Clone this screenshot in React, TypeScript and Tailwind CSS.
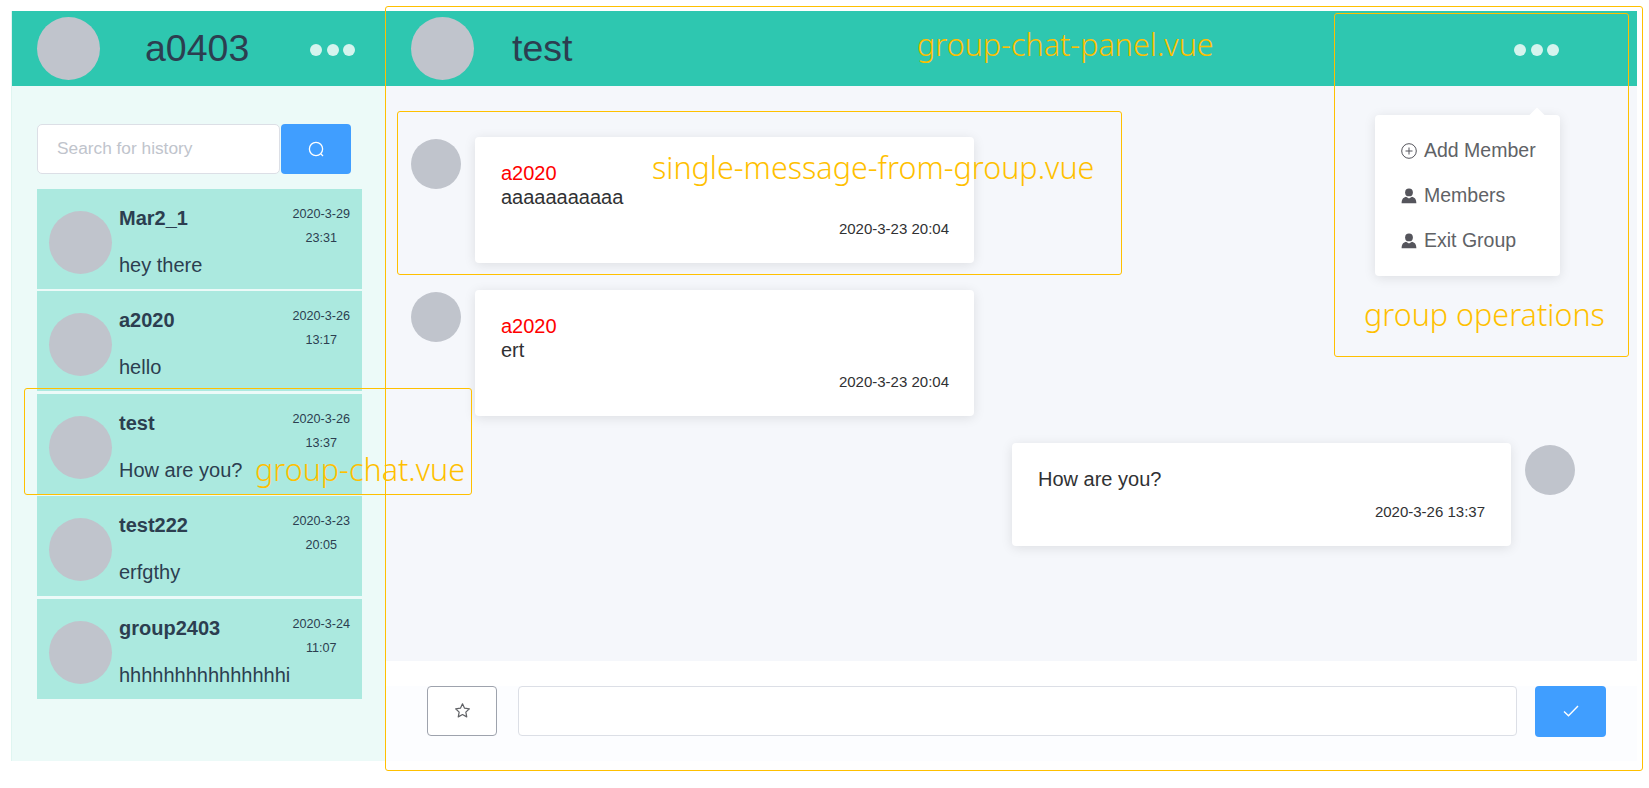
import React from "react";

const chats = [
  { name: "Mar2_1", date: "2020-3-29", time: "23:31", msg: "hey there" },
  { name: "a2020", date: "2020-3-26", time: "13:17", msg: "hello" },
  { name: "test", date: "2020-3-26", time: "13:37", msg: "How are you?" },
  { name: "test222", date: "2020-3-23", time: "20:05", msg: "erfgthy" },
  { name: "group2403", date: "2020-3-24", time: "11:07", msg: "hhhhhhhhhhhhhhhi" },
];

const Dots = () => (
  <div className="flex gap-[4.5px] mt-[3px]">
    <span className="w-3 h-3 rounded-full bg-[#d5f4ee]" />
    <span className="w-3 h-3 rounded-full bg-[#d5f4ee]" />
    <span className="w-3 h-3 rounded-full bg-[#d5f4ee]" />
  </div>
);

const PersonIcon = () => (
  <svg width="16" height="16" viewBox="0 0 16 16" fill="#55555c">
    <circle cx="8" cy="4.4" r="3.9" />
    <path d="M0.6 15.2c.2-3.4 1-5.4 4.4-6.4L8 10.6l3-1.8c3.4 1 4.2 3 4.4 6.4z" />
  </svg>
);

const PlusCircleIcon = () => (
  <svg width="16" height="16" viewBox="0 0 16 16" fill="none" stroke="#55555c" strokeWidth="1">
    <circle cx="8" cy="8" r="7.3" />
    <path d="M8 4.5v7M4.5 8h7" />
  </svg>
);

const MessageCard = ({ sender, text }: { sender: string; text: string }) => (
  <div className="flex items-start pl-[25px]">
    <div className="w-[50px] h-[50px] rounded-full bg-[#c0c4cc] mt-[2px] shrink-0" />
    <div className="ml-[14px] w-[499px] h-[126px] bg-white rounded-[4px] shadow-[0_2px_12px_0_rgba(0,0,0,0.1)] pl-[26px] pr-[25px] pt-6 text-[20px] leading-6 text-[#303133]">
      <div className="text-[#ff0000]">{sender}</div>
      <div>{text}</div>
      <div className="mt-2 text-right text-[15px] text-[#303133]">2020-3-23 20:04</div>
    </div>
  </div>
);

const Annotation = ({ className, label, labelClass }: { className: string; label: string; labelClass: string }) => (
  <div className={`absolute border border-[#ffc000] rounded-[3px] pointer-events-none ${className}`}>
    <span className={`absolute whitespace-nowrap text-[#ffc000] font-light font-['Noto_Sans',sans-serif] ${labelClass}`}>{label}</span>
  </div>
);

export default function App() {
  return (
    <div className="relative h-screen w-full overflow-hidden bg-white pt-[11px] pl-[11px] font-['Liberation_Sans',Arial,sans-serif]">
      <div className="flex w-[1626px]">
        {/* Left side */}
        <div className="w-[375px] h-[750px] bg-[#ecfaf8] border-l border-[#dff5f1] flex flex-col">
          <div className="h-[75px] bg-[#2ec7b0] flex items-center pl-[25px] pr-[31px] shrink-0">
            <div className="w-[63px] h-[63px] rounded-full bg-[#c0c4cc]" />
            <div className="ml-[45px] text-[37.5px] text-[#2c3e50]">a0403</div>
            <div className="ml-auto"><Dots /></div>
          </div>
          <div className="flex pl-[25px] mt-[38px]">
            <div className="w-[243px] h-[50px] bg-white border border-[#dcdfe6] rounded-[5px] pl-[19px] flex items-center text-[17.3px] text-[#c0c4cc]">
              Search for history
            </div>
            <button className="ml-px w-[70px] h-[50px] bg-[#409eff] rounded-[4px] flex items-center justify-center">
              <svg width="17" height="17" viewBox="0 0 17 17" fill="none" stroke="#ffffff" strokeWidth="1.3">
                <circle cx="8" cy="8" r="6.6" />
                <path d="M13 13l2 2" />
              </svg>
            </button>
          </div>
          <div className="flex flex-col gap-[2.4px] ml-[25px] mt-[15px] w-[325px]">
            {chats.map((c) => (
              <div key={c.name} className="flex h-[100px] bg-[#abe9df] pl-[12px] pr-3 text-[#2c3e50]">
                <div className="w-[63px] h-[63px] rounded-full bg-[#c0c4cc] mt-[22px] shrink-0" />
                <div className="ml-[7px] flex-1 min-w-0">
                  <div className="flex justify-between h-[61px]">
                    <div className="pt-[14px] text-[20px] leading-[30px] font-bold">{c.name}</div>
                    <div className="pt-[13px] text-[12.6px] leading-6 text-center">
                      <div>{c.date}</div>
                      <div>{c.time}</div>
                    </div>
                  </div>
                  <div className="text-[20px] leading-[30px] whitespace-nowrap">{c.msg}</div>
                </div>
              </div>
            ))}
          </div>
        </div>

        {/* Right side */}
        <div className="w-[1251px] flex flex-col">
          <div className="h-[75px] bg-[#2ec7b0] flex items-center pl-[25px] pr-[78px] shrink-0">
            <div className="w-[63px] h-[63px] rounded-full bg-[#c0c4cc]" />
            <div className="ml-[38px] text-[37.5px] text-[#2c3e50]">test</div>
            <div className="ml-auto"><Dots /></div>
          </div>
          <div className="h-[575px] bg-[#f5f7fb] pt-[51px] flex flex-col gap-[27px]">
            <MessageCard sender="a2020" text="aaaaaaaaaaa" />
            <MessageCard sender="a2020" text="ert" />
            <div className="flex items-start justify-end pr-[62px]">
              <div className="w-[499px] h-[103px] bg-white rounded-[4px] shadow-[0_2px_12px_0_rgba(0,0,0,0.1)] pl-[26px] pr-[26px] pt-6 text-[20px] leading-6 text-[#303133]">
                <div>How are you?</div>
                <div className="mt-[9px] text-right text-[15px]">2020-3-26 13:37</div>
              </div>
              <div className="ml-[14px] mt-[2px] w-[50px] h-[50px] rounded-full bg-[#c0c4cc] shrink-0" />
            </div>
          </div>
          <div className="h-[25px] bg-white" />
          <div className="h-[75px] bg-[#fcfdff] flex items-start pl-[41px]">
            <button className="w-[70px] h-[50px] border border-[#9ea3ad] rounded-[4px] bg-white flex items-center justify-center pb-[2px]">
              <svg width="17" height="17" viewBox="0 0 24 24" fill="none" stroke="#606266" strokeWidth="1.7" strokeLinejoin="round">
                <path d="M12 2.5l2.9 6.2 6.8.9-5 4.7 1.3 6.7-6-3.3-6 3.3 1.3-6.7-5-4.7 6.8-.9z" />
              </svg>
            </button>
            <div className="ml-[21px] w-[999px] h-[50px] bg-white border border-[#dcdfe6] rounded-[4px]" />
            <button className="ml-[18px] w-[71px] h-[51px] bg-[#409eff] rounded-[4px] flex items-center justify-center pb-[2px]">
              <svg width="16" height="12" viewBox="0 0 16 12" fill="none" stroke="#ffffff" strokeWidth="1.4">
                <path d="M1 6.5l4.5 4.3L15 1" />
              </svg>
            </button>
          </div>
        </div>
      </div>

      {/* Group operations menu */}
      <div className="absolute left-[1375px] top-[115px] w-[185px] h-[161px] bg-white rounded-[4px] shadow-[0_2px_12px_0_rgba(0,0,0,0.1)] pt-[13px] text-[19.5px] text-[#606266]">
        <div className="absolute right-[17px] -top-[5px] w-3 h-3 bg-white rotate-45" />
        <div className="relative flex items-center gap-[7px] pl-[26px] h-[45px]">
          <PlusCircleIcon />
          <span>Add Member</span>
        </div>
        <div className="relative flex items-center gap-[7px] pl-[26px] h-[45px]">
          <PersonIcon />
          <span>Members</span>
        </div>
        <div className="relative flex items-center gap-[7px] pl-[26px] h-[45px]">
          <PersonIcon />
          <span>Exit Group</span>
        </div>
      </div>

      {/* Orange annotations */}
      <Annotation className="left-[385px] top-[6px] w-[1258px] h-[765px]" label="group-chat-panel.vue" labelClass="left-[531px] top-[14px] text-[30.5px] leading-[46px]" />
      <Annotation className="left-[1334px] top-[13px] w-[295px] h-[344px]" label="group operations" labelClass="left-[29px] top-[277px] text-[30.5px] leading-[46px]" />
      <Annotation className="left-[397px] top-[111px] w-[725px] h-[164px]" label="single-message-from-group.vue" labelClass="left-[254px] top-[32px] text-[30.5px] leading-[46px]" />
      <Annotation className="left-[24px] top-[388px] w-[448px] h-[107px]" label="group-chat.vue" labelClass="left-[230px] top-[57px] text-[30.5px] leading-[46px]" />
    </div>
  );
}
